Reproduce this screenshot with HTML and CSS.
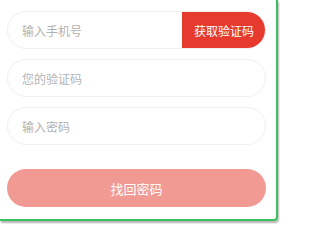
FILE: index.html
```html
<!DOCTYPE html>
<html lang="zh-CN">
<head>
<meta charset="utf-8">
<link rel="stylesheet" href="styles.css">
</head>
<body>
<div class="frame">
  <form class="form">
    <div class="field field-code">
      <span class="ph">输入手机号</span>
      <span class="get-code">获取验证码</span>
    </div>
    <div class="field"><span class="ph">您的验证码</span></div>
    <div class="field"><span class="ph">输入密码</span></div>
    <div class="submit">找回密码</div>
  </form>
</div>
</body>
</html>
```
FILE: styles.css
```css
html, body {
  margin: 0;
  padding: 0;
  background: #ffffff;
  width: 280px;
  height: 224px;
  overflow: hidden;
  font-family: "Noto Sans CJK SC", "Noto Sans", sans-serif;
}
.frame {
  width: 276px;
  height: 219px;
  border-right: 2px solid #3cbf5c;
  border-bottom: 2px solid #3cbf5c;
  border-bottom-right-radius: 4px;
  box-shadow: 1px 2px 2px rgba(0, 0, 0, 0.3);
  box-sizing: content-box;
}
.form {
  margin: 0;
  padding: 11px 10px 0 7px;
  display: flex;
  flex-direction: column;
  gap: 10px;
}
.field {
  height: 38px;
  box-sizing: border-box;
  border: 1px solid #f0f0f0;
  border-radius: 19px;
  display: flex;
  align-items: center;
  padding-left: 14px;
  overflow: hidden;
}
.field-code {
  padding-right: 0;
}
.ph {
  flex: 1;
  font-size: 12px;
  color: #b3b3b3;
}
.get-code {
  width: 84px;
  height: 38px;
  margin: -1px -1px -1px 0;
  background: #e63a2e;
  color: #fff;
  font-size: 12px;
  display: flex;
  align-items: center;
  justify-content: center;
  border-radius: 0 19px 19px 0;
}
.submit {
  margin-top: 14px;
  height: 38px;
  border-radius: 19px;
  background: #f09a93;
  color: #fff;
  font-size: 13px;
  display: flex;
  align-items: center;
  justify-content: center;
}
```
